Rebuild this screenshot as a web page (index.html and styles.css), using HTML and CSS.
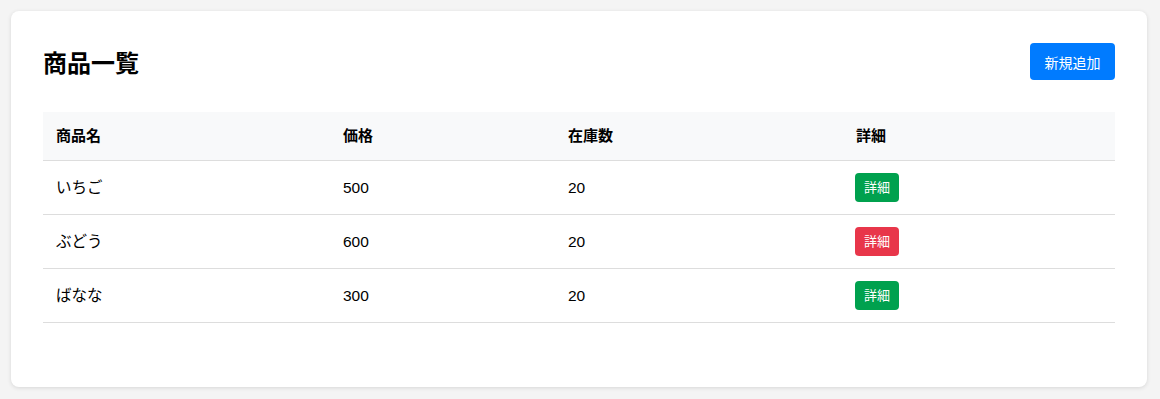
FILE: index.html
```html
<!DOCTYPE html>
<html lang="ja">
<head>
    <meta charset="UTF-8">
    <meta name="viewport" content="width=device-width, initial-scale=1.0">
    <title>商品一覧</title>
    <link rel="stylesheet" href="styles.css">
</head>
<body>
    <div class="container">
        <div class="header">
            <h1>商品一覧</h1>
            <button class="btn-add">新規追加</button>
        </div>

        <table class="product-table">
            <thead>
                <tr>
                    <th class="col-name">商品名</th>
                    <th class="col-price">価格</th>
                    <th class="col-stock">在庫数</th>
                    <th class="col-detail">詳細</th>
                </tr>
            </thead>
            <tbody>
                <tr>
                    <td>いちご</td>
                    <td>500</td>
                    <td>20</td>
                    <td><button class="badge success">詳細</button></td>
                </tr>
                <tr>
                    <td>ぶどう</td>
                    <td>600</td>
                    <td>20</td>
                    <td><button class="badge danger">詳細</button></td>
                </tr>
                <tr>
                    <td>ばなな</td>
                    <td>300</td>
                    <td>20</td>
                    <td><button class="badge success">詳細</button></td>
                </tr>
            </tbody>
        </table>
    </div>
</body>
</html>
```

FILE: styles.css
```css
body {
    font-family: "Liberation Sans", "Noto Sans CJK JP", sans-serif;
    margin: 0;
    padding: 11px 13px 11px 11px;
    background: #f4f4f4;
    color: #000;
}
.container {
    background: white;
    padding: 32px 32px 64px;
    border-radius: 8px;
    box-shadow: 0 1px 4px rgba(0,0,0,0.12);
}
.header {
    display: flex;
    justify-content: space-between;
    align-items: center;
    margin-bottom: 32px;
}
h1 {
    margin: 0;
    font-size: 24px;
    font-weight: bold;
}
.btn-add {
    background: #007bff;
    color: white;
    border: none;
    padding: 0 14.5px;
    height: 37px;
    border-radius: 4px;
    font-family: inherit;
    font-size: 14px;
    cursor: pointer;
}
.product-table {
    width: 100%;
    border-collapse: collapse;
    font-size: 15px;
}
.product-table th,
.product-table td {
    text-align: left;
    padding: 12px 12px 12px 13px;
    line-height: 24px;
    border-bottom: 1px solid #ddd;
}
.product-table th {
    background: #f8f9fa;
    font-weight: bold;
}
.product-table td {
    font-size: 15.5px;
}
.col-name { width: 262px; }
.col-price { width: 200px; }
.col-stock { width: 263px; }
.badge {
    display: inline-block;
    vertical-align: middle;
    border: none;
    color: white;
    font-family: inherit;
    font-size: 13px;
    line-height: 19px;
    padding: 5px 9px;
    margin-left: -1px;
    border-radius: 4px;
    cursor: pointer;
}
.badge.success {
    background: #00a14e;
}
.badge.danger {
    background: #e8364a;
}
```
